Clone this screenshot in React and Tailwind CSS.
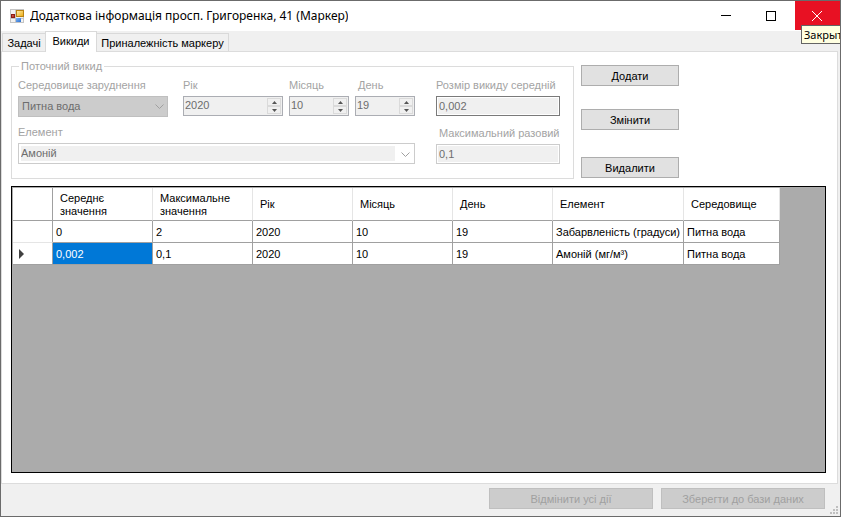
import React from "react";

const cx = (...parts) => parts.filter(Boolean).join(" ");

function AppIcon() {
  return (
    <svg width="14" height="14" viewBox="0 0 14 14" className="shrink-0" aria-hidden="true" shapeRendering="crispEdges">
      <defs>
        <linearGradient id="gold" x1="0" y1="0" x2="1" y2="1">
          <stop offset="0" stopColor="#fff0b0" />
          <stop offset="1" stopColor="#eba80c" />
        </linearGradient>
        <linearGradient id="blue" x1="0" y1="0" x2="1" y2="1">
          <stop offset="0" stopColor="#7db4f5" />
          <stop offset="1" stopColor="#2c6fd0" />
        </linearGradient>
        <linearGradient id="red" x1="0" y1="0" x2="1" y2="1">
          <stop offset="0" stopColor="#e07060" />
          <stop offset="1" stopColor="#a01810" />
        </linearGradient>
      </defs>
      <rect x="0.5" y="0.5" width="13" height="13" fill="#f2f2f2" stroke="#c4c4c4" />
      <rect x="5" y="0" width="1" height="14" fill="#c4c4c4" />
      <rect x="0" y="9" width="14" height="1" fill="#c4c4c4" />
      <rect x="6.5" y="1.5" width="7" height="6" fill="url(#gold)" stroke="#b98212" />
      <rect x="1.5" y="5.5" width="3" height="3" fill="url(#red)" stroke="#8c1c14" />
      <rect x="6" y="9" width="5" height="4" fill="url(#blue)" />
    </svg>
  );
}

function TitleBar() {
  return (
    <header className="relative flex h-[30px] shrink-0 items-stretch bg-white">
      <div className="flex min-w-0 flex-1 items-center gap-[6px] pl-[9px]">
        <AppIcon />
        <h1 className="truncate font-['Noto_Sans',sans-serif] text-[12px] leading-4">
          Додаткова інформація просп. Григоренка, 41 (Маркер)
        </h1>
      </div>
      <button type="button" aria-label="Свернуть" className="flex w-[45px] items-center justify-center pr-[3px] pb-px">
        <svg width="10" height="10" shapeRendering="crispEdges"><rect y="4" width="10" height="1" /></svg>
      </button>
      <button type="button" aria-label="Развернуть" className="flex w-[45px] items-center justify-center pr-[3px] pb-px">
        <svg width="10" height="10" shapeRendering="crispEdges">
          <rect x="0.5" y="0.5" width="9" height="9" fill="none" stroke="#000" />
        </svg>
      </button>
      <button type="button" aria-label="Закрыть" className="mb-px flex w-[45px] items-center justify-center bg-[#e81123] pr-px">
        <svg width="10" height="10" viewBox="0 0 10 10" stroke="#fff" strokeWidth="1">
          <path d="M0 0L10 10M10 0L0 10" />
        </svg>
      </button>
      <div role="tooltip" className="absolute top-[24px] -right-[10px] z-10 h-[19px] w-[49px] border border-[#646464] bg-[#ffffe1] pl-[2px] font-['Noto_Sans',sans-serif] text-[11px] leading-[17px]">
        Закрыть
      </div>
    </header>
  );
}

function Tabs() {
  const base = "border border-[#d9d9d9] whitespace-nowrap";
  const idle = "h-[18px] bg-[#f0f0f0] leading-4 border-b-0";
  return (
    <div role="tablist" className="flex h-5 shrink-0 items-end pl-px">
      <button type="button" role="tab" aria-selected="false" className={cx(base, idle, "w-[43px] border-r-0")}>Задачі</button>
      <button type="button" role="tab" aria-selected="true" className={cx(base, "z-[1] -mb-px h-[21px] w-[52px] border-b-0 bg-white pb-[2px] leading-4")}>Викиди</button>
      <button type="button" role="tab" aria-selected="false" className={cx(base, idle, "w-[132px] border-l-0")}>Приналежність маркеру</button>
    </div>
  );
}

function Field({ id, label, className, labelClass, children }) {
  return (
    <div className={cx("flex flex-col gap-[3px]", className)}>
      <label htmlFor={id} className={cx("leading-4 whitespace-nowrap text-[#a3a3a3]", labelClass)}>{label}</label>
      {children}
    </div>
  );
}

function Chevron() {
  return (
    <svg width="9" height="6" viewBox="0 0 9 6" fill="none" stroke="#a0a0a0" className="pointer-events-none absolute top-[8px] right-[4px]">
      <path d="M0.5 0.5L4.5 4.5L8.5 0.5" />
    </svg>
  );
}

function Spinner({ id, value }) {
  return (
    <div className="flex h-5 w-full border border-[#abadb3] bg-[#f0f0f0]">
      <input id={id} type="number" defaultValue={value} disabled className="w-0 min-w-0 flex-1 [appearance:textfield] pb-[2px] pl-px text-[#6d6d6d]" />
      <div className="flex w-[15px] flex-col py-px pr-px">
        {["M2 4L4.5 1L7 4Z", "M2 1L4.5 4L7 1Z"].map((d) => (
          <span key={d} className="flex flex-1 items-center justify-center border border-[#dadada]">
            <svg width="9" height="5"><path d={d} fill="#555" /></svg>
          </span>
        ))}
      </div>
    </div>
  );
}

function EmissionForm() {
  return (
    <fieldset className="-mt-[6px] w-[563px] border border-[#dcdcdc] px-[6px] pt-1 pb-[14px]">
      <legend className="ml-[1px] px-[2px] leading-[14px] text-[#a3a3a3]">Поточний викид</legend>
      <div className="flex gap-[21px]">
        <div className="flex w-[397px] flex-col gap-[7px]">
          <div className="flex">
            <Field id="medium" label="Середовище заруднення" className="w-[150px]">
              <div className="relative">
                <select id="medium" disabled className="block h-[21px] w-full appearance-none border border-[#bfbfbf] bg-[#cccccc] pl-[3px] text-[#6d6d6d] opacity-100">
                  <option>Питна вода</option>
                </select>
                <Chevron />
              </div>
            </Field>
            <Field id="year" label="Рік" className="ml-[15px] w-[100px]"><Spinner id="year" value="2020" /></Field>
            <Field id="month" label="Місяць" className="ml-[6px] w-[60px]"><Spinner id="month" value="10" /></Field>
            <Field id="day" label="День" className="ml-[6px] w-[60px]" labelClass="pl-[3px]"><Spinner id="day" value="19" /></Field>
          </div>
          <Field id="element" label="Елемент">
            <div className="relative border border-[#cccccc] p-[2px]">
              <select id="element" disabled className="block h-[15px] w-[374px] appearance-none bg-[#f0f0f0] leading-[15px] text-[#6d6d6d] opacity-100">
                <option>Амоній</option>
              </select>
              <Chevron />
            </div>
          </Field>
        </div>
        <div className="flex w-[124px] flex-col gap-[9px]">
          <Field id="avg" label="Розмір викиду середній">
            <div className="border border-[#7a7a7a] bg-white p-px">
              <input id="avg" defaultValue="0,002" disabled className="block h-4 w-full bg-[#f0f0f0] pl-px text-[#6d6d6d]" />
            </div>
          </Field>
          <Field id="max" label="Максимальний разовий" labelClass="pl-[3px]">
            <div className="border border-[#cccccc] bg-white p-px">
              <input id="max" defaultValue="0,1" disabled className="block h-4 w-full bg-[#f0f0f0] pl-px text-[#6d6d6d]" />
            </div>
          </Field>
        </div>
      </div>
    </fieldset>
  );
}

const columns = ["Середнє значення", "Максимальне значення", "Рік", "Місяць", "День", "Елемент", "Середовище"];
const rows = [
  ["0", "2", "2020", "10", "19", "Забарвленість (градуси)", "Питна вода"],
  ["0,002", "0,1", "2020", "10", "19", "Амоній (мг/м³)", "Питна вода"],
];

function EmissionTable() {
  return (
    <div className="mt-[7px] min-h-0 flex-1 overflow-hidden border border-black bg-[#ababab] pt-px pl-px">
      <table className="w-[767px] table-fixed border-separate border-spacing-0">
        <colgroup>
          <col className="w-[40px]" />
          <col className="w-[100px]" />
          <col className="w-[100px]" />
          <col className="w-[100px]" />
          <col className="w-[100px]" />
          <col className="w-[100px]" />
          <col className="w-[131px]" />
          <col className="w-[96px]" />
        </colgroup>
        <thead>
          <tr className="h-[33px] bg-white">
            <td className="border-r border-b border-[#a0a0a0]" />
            {columns.map((c) => (
              <th key={c} scope="col" className="border-r border-b border-r-[#e5e5e5] border-b-[#a0a0a0] p-0 pt-px pr-4 pl-[7px] text-left leading-[13px] font-normal">{c}</th>
            ))}
          </tr>
        </thead>
        <tbody>
          {rows.map((row, r) => (
            <tr key={r} className="h-[22px] bg-white">
              <td className={cx("border-r border-b border-r-[#a0a0a0] p-0", r === 0 ? "border-b-[#e5e5e5]" : "border-b-[#a0a0a0]")}>
                {r === 1 && (
                  <svg width="5" height="10" className="ml-[6px]" aria-label="Поточний рядок"><path d="M0 0L5 5L0 10Z" fill="#404040" /></svg>
                )}
              </td>
              {row.map((value, c) => (
                <td key={c} className={cx("border-r border-b border-[#a0a0a0] p-0 pl-[3px] leading-[14px] whitespace-nowrap", r === 1 && c === 0 && "bg-[#0078d7] text-white")}>{value}</td>
              ))}
            </tr>
          ))}
        </tbody>
      </table>
    </div>
  );
}

function ActionButton({ className, children }) {
  return (
    <button type="button" className={cx("h-[21px] w-[98px] border border-[#adadad] bg-[#e1e1e1] leading-[18px]", className)}>{children}</button>
  );
}

export default function App() {
  const disabledButton = "h-[21px] w-[164px] border border-[#bfbfbf] bg-[#cccccc] leading-[18px] text-[#a0a0a0]";
  return (
    <div className="flex h-screen flex-col overflow-hidden border border-[#6b6b6b] bg-[#f0f0f0] font-['Liberation_Sans',sans-serif] text-[11px] text-black">
      <TitleBar />
      <Tabs />
      <main className="mr-[2px] flex min-h-0 flex-1 flex-col border border-[#dcdcdc] bg-white pt-[13px] pr-[11px] pb-[10px] pl-[9px]">
        <div className="flex items-start gap-[7px]">
          <EmissionForm />
          <div className="flex flex-col">
            <ActionButton>Додати</ActionButton>
            <ActionButton className="mt-[23px]">Змінити</ActionButton>
            <ActionButton className="mt-[27px]">Видалити</ActionButton>
          </div>
        </div>
        <EmissionTable />
      </main>
      <footer className="relative flex h-[32px] shrink-0 items-start justify-end gap-2 pt-1 pr-[15px]">
        <button type="button" disabled className={disabledButton}>Відмінити усі дії</button>
        <button type="button" disabled className={disabledButton}>Зберегти до бази даних</button>
        <svg width="8" height="8" className="absolute right-[2px] bottom-[2px]" fill="#bfbfbf" shapeRendering="crispEdges" aria-hidden="true">
          <path d="M6 0h2v2h-2zM3 3h2v2h-2zM6 3h2v2h-2zM0 6h2v2h-2zM3 6h2v2h-2zM6 6h2v2h-2z" />
        </svg>
      </footer>
    </div>
  );
}
